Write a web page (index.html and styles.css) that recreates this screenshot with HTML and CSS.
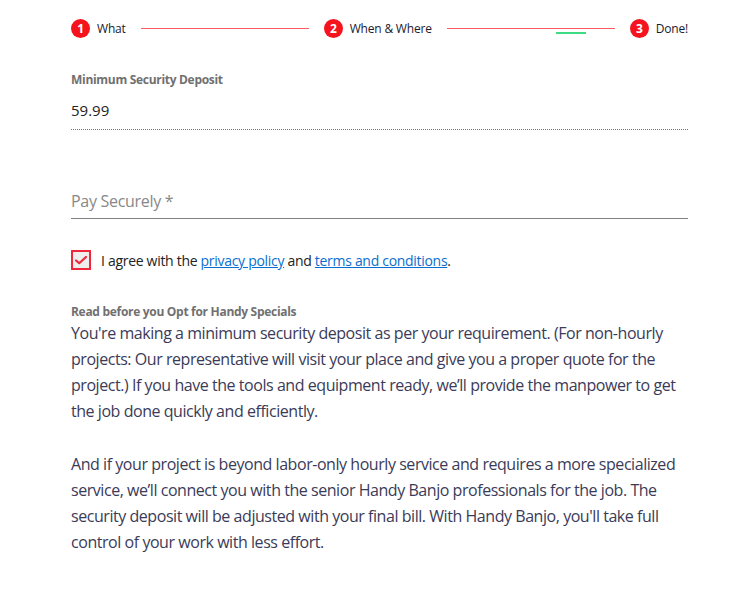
FILE: index.html
```html
<!DOCTYPE html>
<html lang="en">
<head>
    <meta charset="UTF-8">
    <meta name="viewport" content="width=device-width, initial-scale=1.0">
    <title>Handy Specials - Pay</title>
    <link rel="stylesheet" href="styles.css">
</head>
<body>
    <main class="wizard">
        <!-- Langkah -->
        <div class="steps">
            <div class="step"><span class="num">1</span>What</div>
            <div class="bar"></div>
            <div class="step"><span class="num">2</span>When &amp; Where</div>
            <div class="bar"><span class="progress"></span></div>
            <div class="step"><span class="num">3</span>Done!</div>
        </div>

        <div class="field">
            <label class="small-label">Minimum Security Deposit</label>
            <div class="value">59.99</div>
        </div>

        <div class="pay">
            <input type="text" placeholder="Pay Securely *">
        </div>

        <label class="agree">
            <span class="check">
                <svg width="14" height="10" viewBox="0 0 14 10"><path d="M2 5.5 L5.2 8.2 L12 2" fill="none" stroke="#f0273a" stroke-width="2.2" stroke-linecap="round" stroke-linejoin="round"/></svg>
            </span>
            <span>I agree with the <a href="#">privacy policy</a> and <a href="#">terms and conditions</a>.</span>
        </label>

        <div class="info">
            <div class="small-label">Read before you Opt for Handy Specials</div>
            <p>You're making a minimum security deposit as per your requirement. (For non-hourly projects: Our representative will visit your place and give you a proper quote for the project.) If you have the tools and equipment ready, we’ll provide the manpower to get the job done quickly and efficiently.</p>
            <p>And if your project is beyond labor-only hourly service and requires a more specialized service, we’ll connect you with the senior Handy Banjo professionals for the job. The security deposit will be adjusted with your final bill. With Handy Banjo, you'll take full control of your work with less effort.</p>
        </div>
    </main>
</body>
</html>
```

FILE: styles.css
```css
body {
    font-family: "Open Sans", "Noto Sans", sans-serif;
    background-color: #fff;
    color: #3b3b58;
    margin: 0;
    padding: 0;
}
.wizard {
    width: 617px;
    margin-left: 71px;
    padding-top: 18px;
}
.steps {
    display: flex;
    align-items: center;
    height: 20px;
}
.step {
    display: flex;
    align-items: center;
    font-size: 12px;
    color: #1a1a2e;
    white-space: nowrap;
    letter-spacing: -0.2px;
}
.num {
    width: 19px;
    height: 19px;
    border-radius: 50%;
    background-color: #f5141e;
    color: white;
    font-weight: bold;
    font-size: 12px;
    display: flex;
    align-items: center;
    justify-content: center;
    margin-right: 7px;
}
.bar {
    flex: 1;
    height: 1px;
    background-color: #ff5a5f;
    margin: 0 15px;
    position: relative;
}
.bar .progress {
    position: absolute;
    left: 109px;
    top: 4px;
    width: 30px;
    height: 2px;
    background-color: #3ddc84;
}
.field {
    margin-top: 33px;
    border-bottom: 1px dotted #777;
    padding-bottom: 9px;
}
.small-label {
    display: block;
    font-size: 12px;
    font-weight: bold;
    color: #707070;
    letter-spacing: -0.3px;
}
.value {
    font-size: 15px;
    color: #222;
    margin-top: 12px;
}
.pay {
    margin-top: 60px;
}
.pay input {
    width: 100%;
    box-sizing: border-box;
    border: none;
    border-bottom: 1px solid #808080;
    padding: 0 0 6px 0;
    font-family: inherit;
    font-size: 16px;
    letter-spacing: -0.3px;
    outline: none;
}
.pay input::placeholder {
    color: #888;
}
.agree {
    display: flex;
    align-items: center;
    font-size: 14px;
    color: #222;
    margin-top: 31px;
    letter-spacing: -0.3px;
}
.check {
    width: 16px;
    height: 16px;
    border: 2px solid #f0273a;
    background-color: #eee;
    display: flex;
    align-items: center;
    justify-content: center;
    margin-right: 10px;
}
.agree a {
    color: #0a6ed1;
}
.info {
    margin-top: 33px;
}
.info p {
    font-size: 16px;
    line-height: 26px;
    margin: 0 0 27px 0;
    letter-spacing: -0.45px;
}
```
